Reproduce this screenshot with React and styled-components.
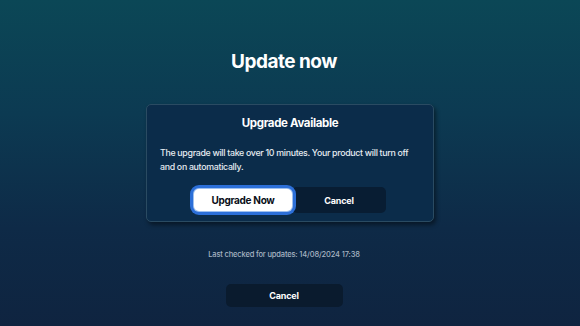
import styled, { createGlobalStyle } from "styled-components";

const GlobalStyle = createGlobalStyle`
  html, body {
    margin: 0;
    padding: 0;
  }
  body {
    width: 580px;
    height: 326px;
    overflow: hidden;
    font-family: Inter, "Liberation Sans", sans-serif;
    background: linear-gradient(180deg, #0b4756 0%, #0c3a52 35%, #0e2a47 70%, #0f2440 100%);
    color: #fff;
  }
`;

const Screen = styled.div`
  width: 580px;
  height: 326px;
  display: flex;
  flex-direction: column;
  align-items: center;
  box-sizing: border-box;
  padding: 50px 12px 0 0;
`;

const Title = styled.h1`
  margin: 0;
  font-size: 19px;
  line-height: 24px;
  font-weight: 700;
  letter-spacing: -0.5px;
`;

const Dialog = styled.div`
  margin: 30px 0 0 12px;
  width: 288px;
  height: 118px;
  box-sizing: border-box;
  padding: 10px 13px;
  background: #0b2c4a;
  border: 1px solid #2a4b62;
  border-radius: 5px;
  box-shadow: 2px 3px 4px rgba(0, 0, 0, 0.45);
  display: flex;
  flex-direction: column;
`;

const DialogTitle = styled.h2`
  margin: 0;
  font-size: 11.5px;
  line-height: 16px;
  font-weight: 700;
  letter-spacing: -0.35px;
  text-align: center;
`;

const Message = styled.p`
  margin: 15px 0 0;
  font-size: 8.8px;
  line-height: 14px;
  font-weight: 500;
  letter-spacing: -0.3px;
  color: #e6ebf1;
`;

const Actions = styled.div`
  margin-top: 13px;
  display: flex;
  align-items: center;
  justify-content: center;
`;

const Button = styled.button`
  width: ${(p) => p.$width || 96}px;
  height: ${(p) => p.$height || 24}px;
  border: none;
  border-radius: 5px;
  font-family: inherit;
  font-weight: 700;
  font-size: ${(p) => (p.$primary ? "10px" : "9px")};
  letter-spacing: ${(p) => (p.$primary ? "-0.3px" : "-0.2px")};
  color: ${(p) => (p.$primary ? "#0a0f18" : "#ffffff")};
  background: ${(p) => (p.$primary ? "#ffffff" : "#081d33")};
  box-shadow: ${(p) =>
    p.$primary ? "0 0 0 1px #9fc0ee, 0 0 0 4px #2c6fd8" : "none"};
  position: relative;
  z-index: ${(p) => (p.$primary ? 1 : 0)};
  cursor: pointer;
  padding: 0;
`;

const Checked = styled.div`
  margin-top: 27px;
  font-size: 7.5px;
  line-height: 12px;
  font-weight: 500;
  letter-spacing: -0.15px;
  color: #a7b4c2;
`;

const FooterButton = styled(Button)`
  margin-top: 23px;
  background: #0a1b2e;
  border-radius: 5px;
`;

export default function App() {
  return (
    <>
      <GlobalStyle />
      <Screen>
        <Title>Update now</Title>
        <Dialog>
          <DialogTitle>Upgrade Available</DialogTitle>
          <Message>
            The upgrade will take over 10 minutes. Your product will turn off
            and on automatically.
          </Message>
          <Actions>
            <Button $primary $width={98} $height={22}>
              Upgrade Now
            </Button>
            <Button $width={94} $height={26}>
              Cancel
            </Button>
          </Actions>
        </Dialog>
        <Checked>Last checked for updates: 14/08/2024 17:38</Checked>
        <FooterButton $width={117} $height={23}>
          Cancel
        </FooterButton>
      </Screen>
    </>
  );
}
